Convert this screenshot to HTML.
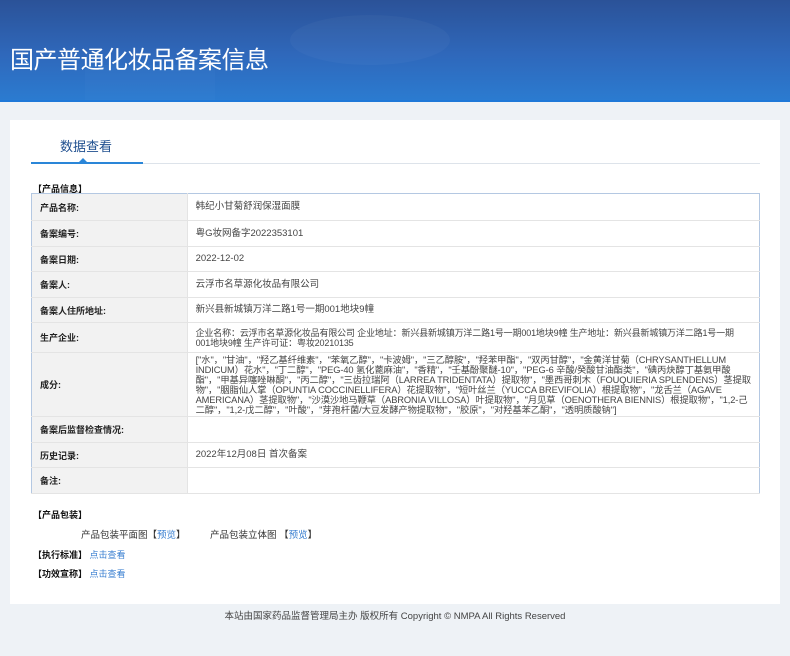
<!DOCTYPE html>
<html><head><meta charset="utf-8"><style>
*{margin:0;padding:0;box-sizing:border-box}
body{width:790px;height:656px;background:#eef2f6;font-family:"Liberation Sans","Noto Sans CJK SC",sans-serif;color:#333;position:relative;overflow:hidden}
.hd{position:absolute;left:0;top:0;width:790px;height:102px;background:linear-gradient(180deg,#2b5298 0%,#2f68bb 55%,#2b7bd0 100%);border-bottom:2px solid #1e78d8;overflow:hidden}
.hd .b1{position:absolute;left:290px;top:15px;width:160px;height:50px;border-radius:50%;background:rgba(255,255,255,.03)}
.hd .b2{position:absolute;left:85px;top:65px;width:130px;height:40px;background:rgba(100,150,230,.07)}
.hd h1{position:absolute;left:10px;top:40px;font-size:24px;font-weight:normal;color:#fff;font-family:"Noto Sans CJK SC",sans-serif;letter-spacing:-0.5px}
.card{position:absolute;left:10px;top:120px;width:770px;height:484px;background:#fff}
.tab{position:absolute;left:60px;top:136px;font-size:13px;color:#1f4f8f;font-family:"Noto Sans CJK SC",sans-serif}
.tl{position:absolute;left:31px;top:163px;width:729px;height:1px;background:#dde3ea}
.tu{position:absolute;left:31px;top:162px;width:112px;height:2px;background:#2a86d8}
.tri{position:absolute;left:79px;top:158px;border:4px solid transparent;border-bottom-color:#2a86d8;border-top:none}
.sec{position:absolute;font-size:9px;font-weight:bold;color:#111}
table{position:absolute;left:31px;top:193px;width:729px;border-collapse:collapse;border:1px solid #b4c8e2;font-size:9.5px}
td{border-bottom:1px solid #e4e4e4;vertical-align:middle;padding:0 8px}
td.l{width:160px;background:#f2f2f2;font-weight:bold;color:#222;border-right:1px solid #e4e4e4;font-size:9px}
td.v{color:#444;line-height:10px}
.ing{font-size:9.3px;line-height:9.6px;white-space:nowrap;letter-spacing:-.1px}
.prod{font-size:9px;white-space:nowrap;letter-spacing:-.15px}
a{color:#3a7fd0;text-decoration:none}
.ft{position:absolute;top:608px;left:0;width:790px;text-align:center;font-size:9.5px;color:#444}
.t{position:absolute;font-size:9.5px;color:#333}
</style></head><body>
<div class="hd"><div class="b1"></div><div class="b2"></div><h1>国产普通化妆品备案信息</h1></div>
<div class="card"></div>
<div class="tab">数据查看</div>
<div class="tl"></div><div class="tu"></div><div class="tri"></div>
<div class="sec" style="left:33px;top:182px">【产品信息】</div>
<table>
<tr style="height:27px"><td class="l">产品名称:</td><td class="v">韩纪小甘菊舒润保湿面膜</td></tr>
<tr style="height:26px"><td class="l">备案编号:</td><td class="v">粤G妆网备字2022353101</td></tr>
<tr style="height:25px"><td class="l">备案日期:</td><td class="v">2022-12-02</td></tr>
<tr style="height:26px"><td class="l">备案人:</td><td class="v">云浮市名草源化妆品有限公司</td></tr>
<tr style="height:25px"><td class="l">备案人住所地址:</td><td class="v">新兴县新城镇万洋二路1号一期001地块9幢</td></tr>
<tr style="height:30px"><td class="l">生产企业:</td><td class="v prod">企业名称：云浮市名草源化妆品有限公司 企业地址：新兴县新城镇万洋二路1号一期001地块9幢 生产地址：新兴县新城镇万洋二路1号一期<br>001地块9幢 生产许可证：粤妆20210135</td></tr>
<tr style="height:64px"><td class="l">成分:</td><td class="v ing">["水"，"甘油"，"羟乙基纤维素"，"苯氧乙醇"，"卡波姆"，"三乙醇胺"，"羟苯甲酯"，"双丙甘醇"，"金黄洋甘菊（CHRYSANTHELLUM<br>INDICUM）花水"，"丁二醇"，"PEG-40 氢化蓖麻油"，"香精"，"壬基酚聚醚-10"，"PEG-6 辛酸/癸酸甘油酯类"，"碘丙炔醇丁基氨甲酸<br>酯"，"甲基异噻唑啉酮"，"丙二醇"，"三齿拉瑞阿（LARREA TRIDENTATA）提取物"，"墨西哥刺木（FOUQUIERIA SPLENDENS）茎提取<br>物"，"胭脂仙人掌（OPUNTIA COCCINELLIFERA）花提取物"，"短叶丝兰（YUCCA BREVIFOLIA）根提取物"，"龙舌兰（AGAVE<br>AMERICANA）茎提取物"，"沙漠沙地马鞭草（ABRONIA VILLOSA）叶提取物"，"月见草（OENOTHERA BIENNIS）根提取物"，"1,2-己<br>二醇"，"1,2-戊二醇"，"叶酸"，"芽孢杆菌/大豆发酵产物提取物"，"胶原"，"对羟基苯乙酮"，"透明质酸钠"]</td></tr>
<tr style="height:26px"><td class="l">备案后监督检查情况:</td><td class="v"></td></tr>
<tr style="height:25px"><td class="l">历史记录:</td><td class="v">2022年12月08日 首次备案</td></tr>
<tr style="height:26px"><td class="l">备注:</td><td class="v"></td></tr>
</table>
<div class="sec" style="left:33px;top:508px">【产品包装】</div>
<div class="t" style="left:81px;top:527px">产品包装平面图【<a>预览</a>】</div>
<div class="t" style="left:210px;top:527px">产品包装立体图 【<a>预览</a>】</div>
<div class="sec" style="left:33px;top:548px">【执行标准】 <a style="font-weight:normal">点击查看</a></div>
<div class="sec" style="left:33px;top:567px">【功效宣称】 <a style="font-weight:normal">点击查看</a></div>
<div class="ft">本站由国家药品监督管理局主办 版权所有 Copyright © NMPA All Rights Reserved</div>
</body></html>
